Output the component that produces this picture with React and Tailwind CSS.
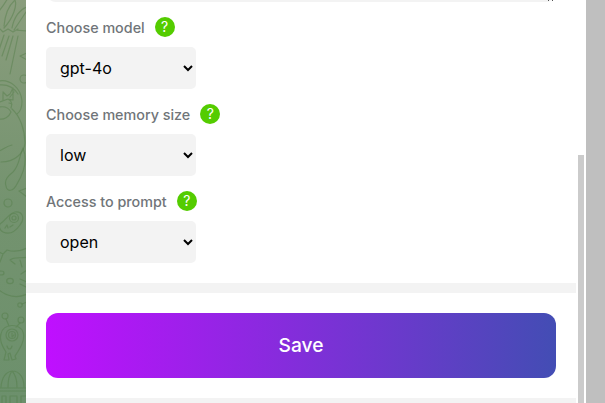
import React from "react";

function Doodles() {
  return (
    <svg width="26" height="403" viewBox="0 0 26 403" fill="none" stroke="#537d47" strokeOpacity="0.45" strokeWidth="1.2" strokeLinecap="round" strokeLinejoin="round">
      {/* flower petals and stems */}
      <path d="M-2 12C2 8 5 3 8-2M4 26C5 15 8 6 15 0C17 5 14 17 4 28M12 28C14 17 20 9 27 7M26 12C22 18 18 24 14 30L27 31M-1 28L3 32L8 29L13 32L18 29M4 35L-1 50M9 36L2 56M13 36L6 60M18 36L10 74" />
      <path d="M27 53L20 56L27 60" />
      <circle cx="24" cy="79" r="4" />
      {/* cat in a round helmet */}
      <path d="M-1 81C10 79 21 88 22 101C22 107 20 112 17 114M-1 85C7 84 14 88 18 94M3 93L3 101M3 92L7 96L10 94L13 88L13 100L8 99M0 102L8 99C12 101 12 105 11 108M-1 107C5 106 9 108 11 112C9 117 4 120-1 119M12 109C20 116 25 130 25 143C24 153 15 162 1 162M12 104L9 103M14 92L10 97" />
      <path d="M-1 151C4 149 7 146 12 145M6 186C4 180 8 176 13 172C20 165 19 156 23 148C27 158 25 171 17 184C13 192 7 192 6 186ZM27 188L19 191L27 197" />
      <circle cx="8" cy="203" r="4" />
      {/* bean */}
      <path d="M0 224C6 220 9 213 15 212C23 211 25 219 20 225C15 232 9 235 3 232C-1 230-1 226 0 224Z" />
      <circle cx="14" cy="218" r="4.5" /><circle cx="14" cy="218" r="2" />
      <path d="M5 228L7 225L8 228M10 227L13 225M-1 252L3 254L7 250C13 252 19 252 27 248M3 254L0 262M10 260C15 256 22 259 27 257M11 261L15 264M20 260L22 267" />
      {/* planet */}
      <path d="M-1 290C6 296 17 299 27 294" />
      <ellipse cx="1" cy="273" rx="3" ry="2" />
      <ellipse cx="10" cy="281" rx="3.3" ry="2.6" />
      <path d="M21 274L27 270M20 279L27 282M20 284L26 287" />
      <circle cx="20" cy="305" r="2.2" /><path d="M22 304L27 302" />
      {/* one-eyed creature */}
      <circle cx="5" cy="316" r="3" /><circle cx="21" cy="320" r="3" />
      <path d="M6 319L9 326M20 323L16 327M1 334C3 323 20 323 23 332C26 340 19 350 15 356L16 359L12 360L10 353L8 354L9 360L4 360L6 352C2 346-1 340 1 334Z" />
      <circle cx="12" cy="335" r="6" /><circle cx="12" cy="335" r="3.5" />
      <path d="M12 333L12 337L14 335M7 346C8 350 11 350 12 346" />
      {/* domed building */}
      <path d="M1 387C2 376 6 372 12 371C20 371 24 378 24 387M-1 388H27M-1 391H27M8 387C8 380 9 375 12 371C16 375 17 380 17 387M2 403V396H6V403M10 403V396H17V403M21 403V396H27" />
    </svg>
  );
}

function SelectField({ label, value }) {
  return (
    <div>
      <div className="flex h-5 items-center gap-2.5">
        <span className="pt-0.5 text-[14.33px] leading-5 font-medium text-[#707579]">{label}</span>
        <span className="flex size-5 items-center justify-center rounded-full bg-[#54cc00] text-[14px] leading-5 font-normal text-white">?</span>
      </div>
      <select defaultValue={value} className="mt-2.5 block h-[42px] w-[150px] rounded-[5px] bg-[#f3f3f3] px-2.5 text-[16px] text-black outline-none">
        <option>{value}</option>
      </select>
    </div>
  );
}

export default function App() {
  return (
    <div className="flex h-[403px] w-[605px] overflow-hidden bg-white font-['Inter',sans-serif]">
      <aside className="w-[26px] shrink-0 overflow-hidden bg-linear-to-b from-[#8a9d7d] via-[#74936f] via-50% to-[#6c906c]">
        <Doodles />
      </aside>
      <main className="h-full w-[550px] shrink-0">
        <section className="px-5">
          <div className="flex h-0.5 items-end overflow-hidden">
            <div className="flex h-10 w-full shrink-0 items-end justify-end rounded-[10px] bg-[#f3f3f3]">
              <svg width="10" height="2" className="mb-px" viewBox="0 0 10 2">
                <path d="M2 0h1v2h-1zM6 0h1v2h-1z" fill="#555" />
              </svg>
            </div>
          </div>
          <div className="flex flex-col gap-[15px] pt-[15px] pb-5">
            <SelectField label="Choose model" value="gpt-4o" />
            <SelectField label="Choose memory size" value="low" />
            <SelectField label="Access to prompt" value="open" />
          </div>
        </section>
        <div className="h-2.5 bg-[#f3f3f3]" />
        <section className="p-5">
          <button className="block h-[65px] w-full rounded-[12px] bg-linear-to-r/srgb from-[#c00fff] to-[#434db4] text-[19.2px] font-medium text-white">Save</button>
        </section>
        <div className="h-2.5 bg-[#f3f3f3]" />
      </main>
      <div className="w-2.5 shrink-0 px-0.5 pt-[155px]">
        <div className="h-full bg-[#cbcbcb]" />
      </div>
      <div className="grow bg-[#bfbfbf]" />
    </div>
  );
}
